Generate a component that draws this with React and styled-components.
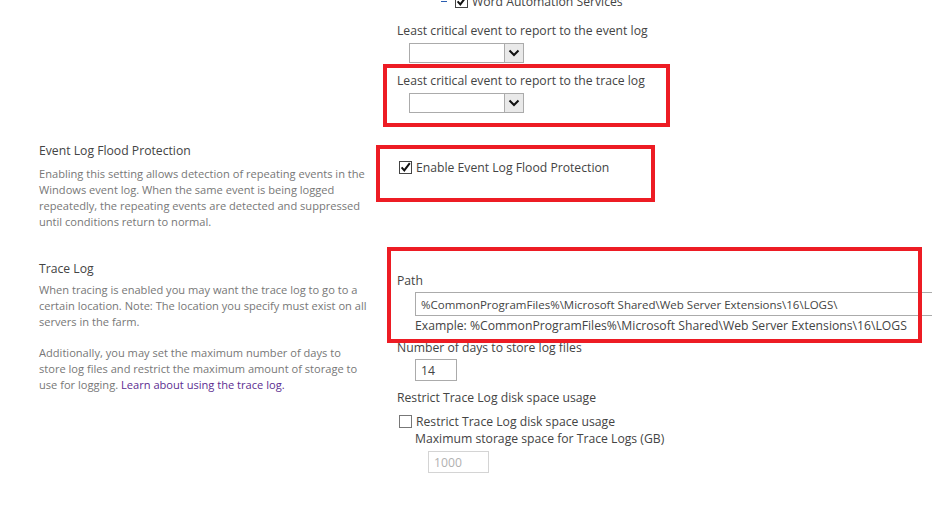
import styled, { createGlobalStyle } from "styled-components";

const GlobalStyle = createGlobalStyle`
  html, body {
    margin: 0;
    padding: 0;
    background: #fff;
    overflow: hidden;
  }
  body {
    font-family: "Open Sans", "Noto Sans", sans-serif;
    color: #444;
  }
`;

const Page = styled.div`
  position: relative;
  width: 932px;
  height: 505px;
  padding-top: 1px;
  box-sizing: border-box;
  overflow: hidden;
`;

const Section = styled.div`
  display: grid;
  grid-template-columns: 358px 1fr;
  padding-left: 39px;
  margin-top: ${(p) => p.$top || 0}px;
`;

const LeftCol = styled.div`
  display: flex;
  flex-direction: column;
  width: 328px;
`;

const RightCol = styled.div`
  display: flex;
  flex-direction: column;
  align-items: flex-start;
`;

const Title = styled.div`
  font-size: 12.2px;
  line-height: 18px;
  color: #444;
`;

const Desc = styled.p`
  margin: ${(p) => p.$top || 0}px 0 0 0;
  font-size: 11.1px;
  line-height: 16px;
  color: #777;
`;

const Link = styled.a`
  color: #5c2d91;
  text-decoration: none;
`;

const Label = styled.div`
  font-size: 12.2px;
  line-height: 18px;
  color: #444;
  white-space: nowrap;
  margin-top: ${(p) => p.$top || 0}px;
  margin-left: ${(p) => p.$left || 0}px;
`;

const TreeRow = styled.div`
  display: flex;
  align-items: center;
  gap: 4px;
  height: 18px;
  margin-top: -9px;
  margin-left: 44px;
  font-size: 12.2px;
  color: #444;
  white-space: nowrap;
`;

const Minus = styled.span`
  width: 6px;
  height: 1px;
  background: #2a5db0;
  margin-right: 4px;
`;

const Select = styled.div`
  display: flex;
  width: 115px;
  height: 20px;
  box-sizing: border-box;
  border: 1px solid #ababab;
  background: #fff;
  margin-top: ${(p) => p.$top || 0}px;
  margin-left: 12px;
`;

const SelectArrow = styled.div`
  margin-left: auto;
  width: 18px;
  height: 100%;
  border-left: 1px solid #ababab;
  background: #e9e9e9;
  display: flex;
  align-items: center;
  justify-content: center;
`;

const CheckRow = styled.label`
  display: flex;
  align-items: center;
  gap: 4px;
  height: 18px;
  margin-top: ${(p) => p.$top || 0}px;
  margin-left: 2px;
  font-size: 12.2px;
  color: #444;
  white-space: nowrap;
`;

const Box = styled.span`
  width: 13px;
  height: 13px;
  box-sizing: border-box;
  border: 1px solid ${(p) => (p.$checked ? "#444" : "#777")};
  background: #fff;
  display: flex;
  align-items: center;
  justify-content: center;
`;

const TextInput = styled.div`
  box-sizing: border-box;
  width: ${(p) => p.$width}px;
  height: ${(p) => p.$height}px;
  margin-top: ${(p) => p.$top || 0}px;
  margin-left: ${(p) => p.$left || 0}px;
  border: 1px solid ${(p) => (p.$disabled ? "#d4d4d4" : "#ababab")};
  padding-left: ${(p) => p.$pad || 5}px;
  display: flex;
  align-items: center;
  font-size: ${(p) => p.$size || 12.2}px;
  color: ${(p) => (p.$disabled ? "#b1b1b1" : "#444")};
  white-space: nowrap;
  flex-shrink: 0;
`;

const Annotation = styled.div`
  position: absolute;
  box-sizing: border-box;
  border: 4px solid #ed1c24;
  pointer-events: none;
`;

const Chevron = () => (
  <svg width="12" height="8" viewBox="0 0 12 8">
    <path d="M1.5 1.5 L6 6 L10.5 1.5" fill="none" stroke="#111" strokeWidth="2" />
  </svg>
);

const Tick = () => (
  <svg width="11" height="11" viewBox="0 0 11 11">
    <path d="M1.6 5.4 L4.3 8.4 L9.8 1.2" fill="none" stroke="#111" strokeWidth="2" />
  </svg>
);

const Checkbox = ({ checked, children, top }) => (
  <CheckRow $top={top}>
    <Box $checked={checked}>{checked && <Tick />}</Box>
    {children}
  </CheckRow>
);

const App = () => {
  return (
    <Page>
      <GlobalStyle />

      <Section>
        <div />
        <RightCol>
          <TreeRow>
            <Minus />
            <Box $checked>
              <Tick />
            </Box>
            Word Automation Services
          </TreeRow>
          <Label $top={12}>Least critical event to report to the event log</Label>
          <Select $top={3}>
            <SelectArrow>
              <Chevron />
            </SelectArrow>
          </Select>
          <Label $top={9}>Least critical event to report to the trace log</Label>
          <Select $top={3}>
            <SelectArrow>
              <Chevron />
            </SelectArrow>
          </Select>
        </RightCol>
      </Section>

      <Section $top={29}>
        <LeftCol>
          <Title>Event Log Flood Protection</Title>
          <Desc $top={6}>
            Enabling this setting allows detection of repeating events in the
            Windows event log. When the same event is being logged repeatedly,
            the repeating events are detected and suppressed until conditions
            return to normal.
          </Desc>
        </LeftCol>
        <RightCol>
          <Checkbox checked top={16}>
            Enable Event Log Flood Protection
          </Checkbox>
        </RightCol>
      </Section>

      <Section $top={30}>
        <LeftCol>
          <Title>Trace Log</Title>
          <Desc $top={4}>
            When tracing is enabled you may want the trace log to go to a
            certain location. Note: The location you specify must exist on all
            servers in the farm.
          </Desc>
          <Desc $top={15}>
            Additionally, you may set the maximum number of days to store log
            files and restrict the maximum amount of storage to use for logging.{" "}
            <Link href="#">Learn about using the trace log.</Link>
          </Desc>
        </LeftCol>
        <RightCol>
          <Label $top={12}>Path</Label>
          <TextInput $width={540} $height={24} $top={2} $left={18} $size={11.5}>
            %CommonProgramFiles%\Microsoft Shared\Web Server Extensions\16\LOGS\
          </TextInput>
          <Label $top={1} $left={18}>
            Example: %CommonProgramFiles%\Microsoft Shared\Web Server Extensions\16\LOGS
          </Label>
          <Label $top={4}>Number of days to store log files</Label>
          <TextInput $width={42} $height={22} $top={2} $left={18}>
            14
          </TextInput>
          <Label $top={8}>Restrict Trace Log disk space usage</Label>
          <Checkbox top={5}>Restrict Trace Log disk space usage</Checkbox>
          <Label $left={18}>Maximum storage space for Trace Logs (GB)</Label>
          <TextInput $width={61} $height={22} $top={3} $left={31} $disabled>
            1000
          </TextInput>
        </RightCol>
      </Section>

      <Annotation style={{ left: 383, top: 64, width: 287, height: 63 }} />
      <Annotation style={{ left: 376, top: 145, width: 279, height: 57 }} />
      <Annotation style={{ left: 387, top: 247, width: 535, height: 96 }} />
    </Page>
  );
};

export default App;
